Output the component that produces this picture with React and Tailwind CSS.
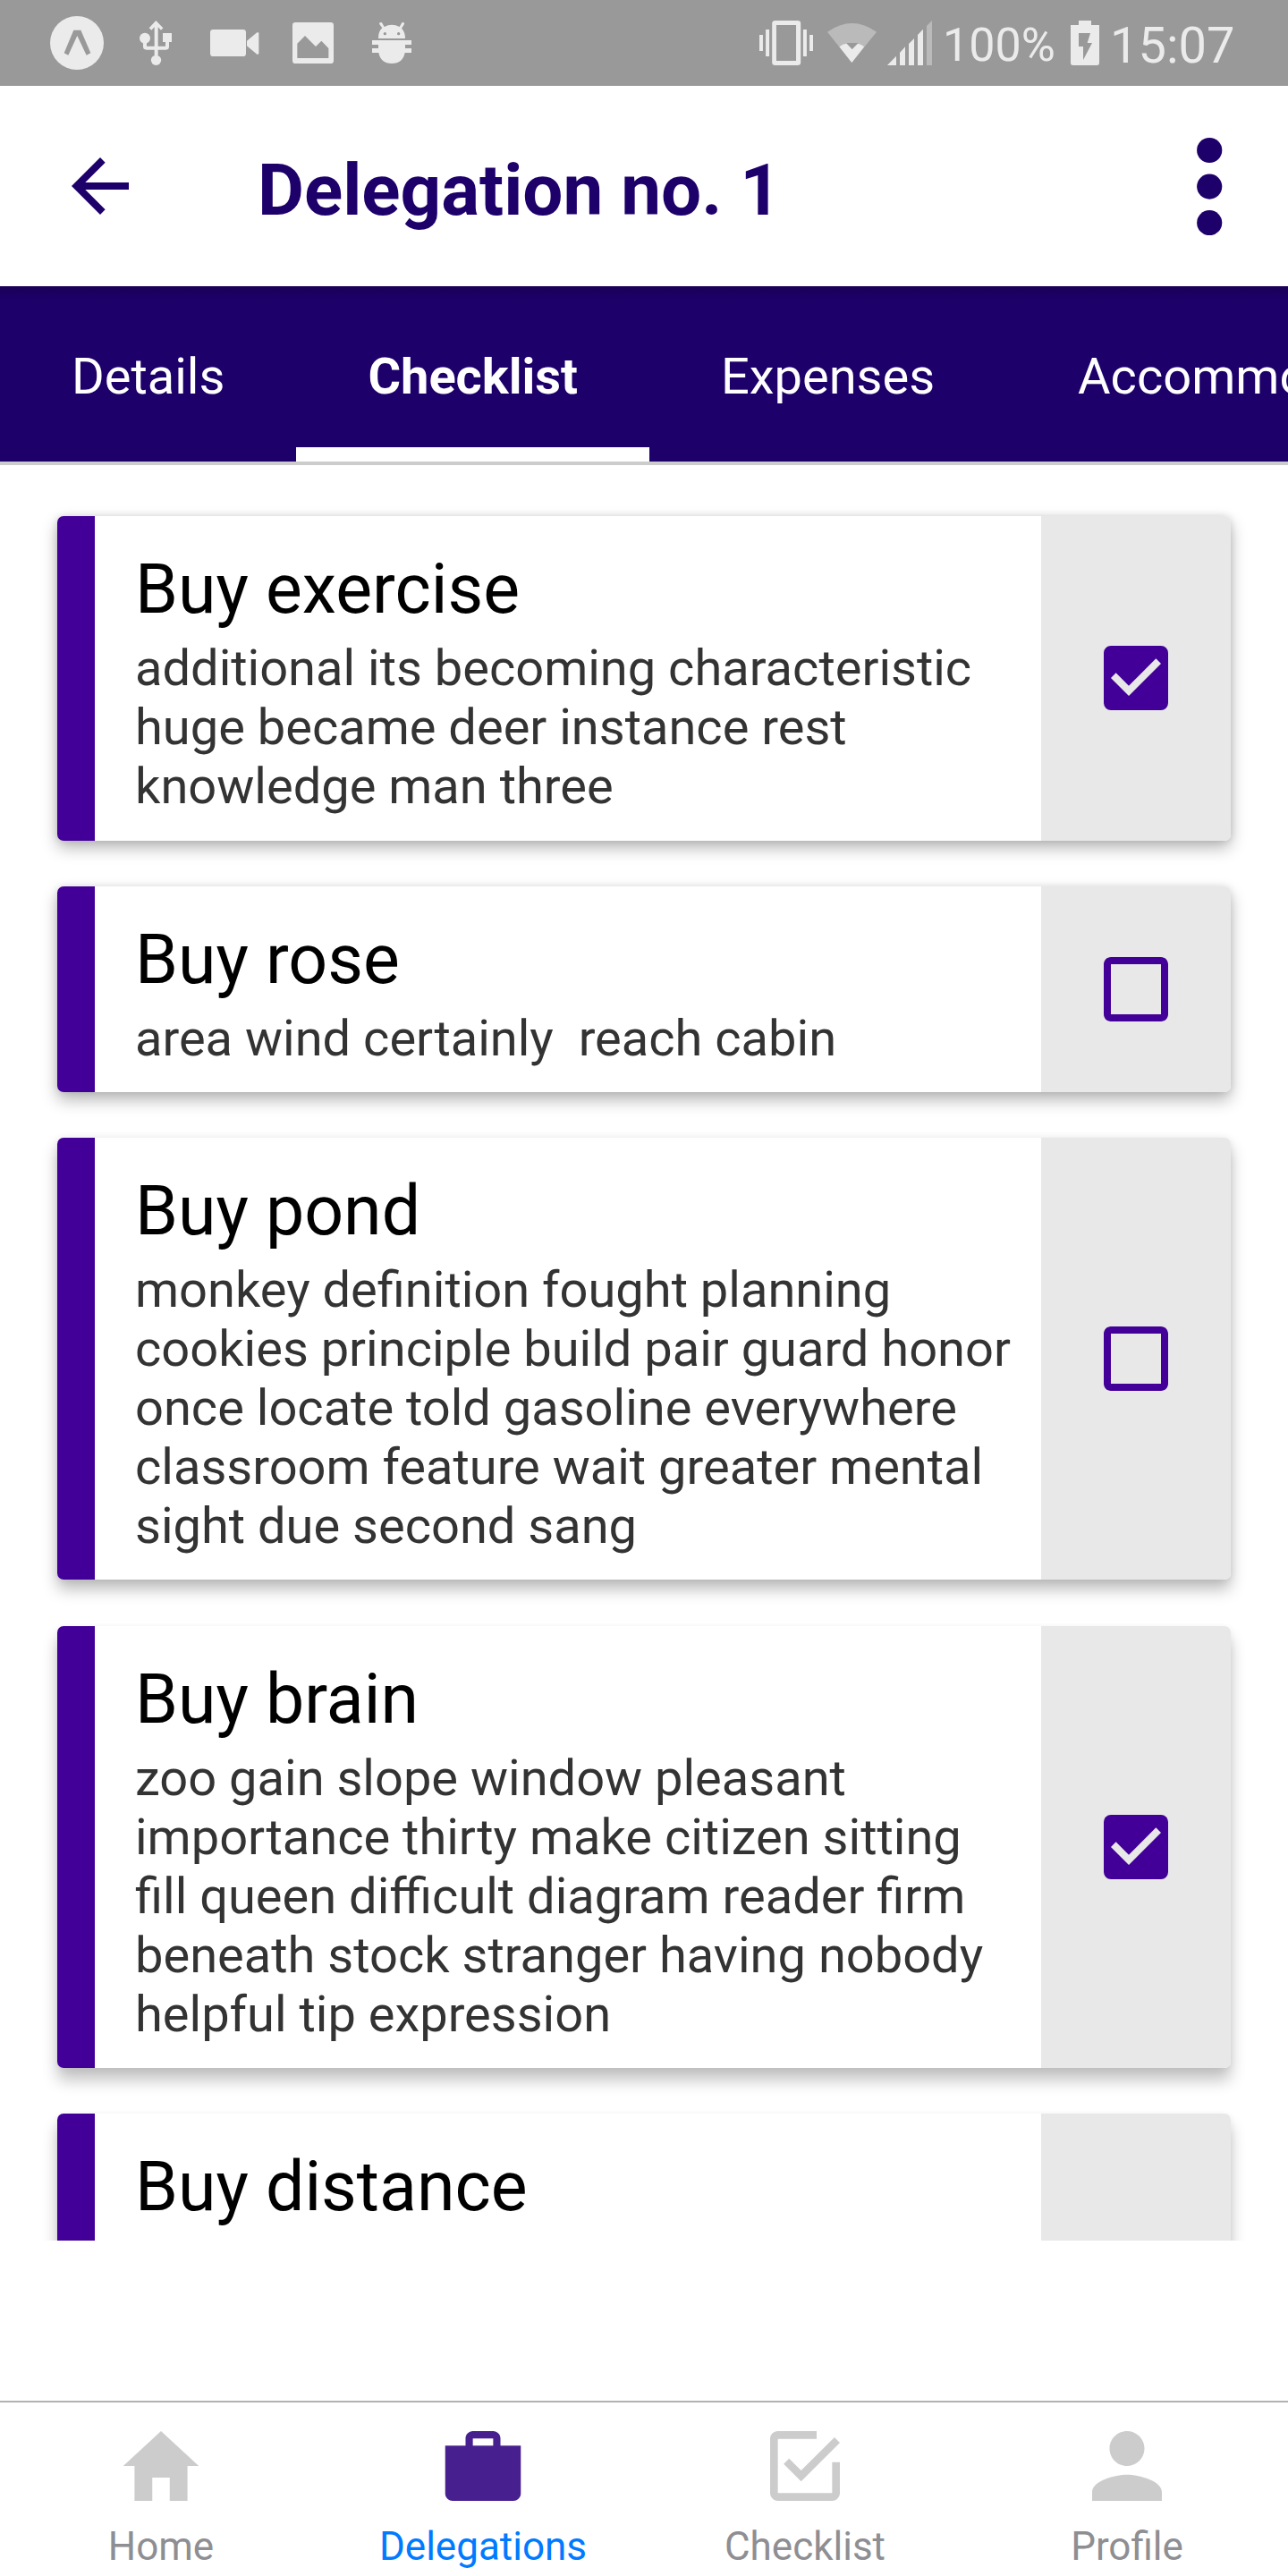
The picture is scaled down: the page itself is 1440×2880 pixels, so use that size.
import React from "react";
import { IoMdHome, IoMdBriefcase, IoMdCheckboxOutline, IoMdPerson } from "react-icons/io";
import { MdArrowBack, MdCheckBox, MdCheckBoxOutlineBlank } from "react-icons/md";

const cards = [
  {
    title: "Buy exercise",
    lines: ["additional its becoming characteristic", "huge became deer instance rest", "knowledge man three"],
    done: true,
    size: "h-[363px] shadow-[0_8px_18px_rgba(0,0,0,0.28),0_0_8px_rgba(0,0,0,0.12)]",
  },
  {
    title: "Buy rose",
    lines: ["area wind certainly  reach cabin"],
    done: false,
    size: "h-[230px] shadow-[0_9px_18px_rgba(0,0,0,0.28),0_0_8px_rgba(0,0,0,0.1)]",
  },
  {
    title: "Buy pond",
    lines: [
      "monkey definition fought planning",
      "cookies principle build pair guard honor",
      "once locate told gasoline everywhere",
      "classroom feature wait greater mental",
      "sight due second sang",
    ],
    done: false,
    size: "mb-px h-[494px] shadow-[0_11px_17px_rgba(0,0,0,0.26),0_1px_8px_rgba(0,0,0,0.08)]",
  },
  {
    title: "Buy brain",
    lines: [
      "zoo gain slope window pleasant",
      "importance thirty make citizen sitting",
      "fill queen difficult diagram reader firm",
      "beneath stock stranger having nobody",
      "helpful tip expression",
    ],
    done: true,
    size: "h-[494px] shadow-[0_14px_17px_rgba(0,0,0,0.23),0_2px_8px_rgba(0,0,0,0.06)]",
  },
  {
    title: "Buy distance",
    lines: [],
    done: null,
    size: "h-[230px] shadow-[0_14px_17px_rgba(0,0,0,0.23),0_2px_8px_rgba(0,0,0,0.06)]",
  },
];

const navItems = [
  { label: "Home", Icon: IoMdHome },
  { label: "Delegations", Icon: IoMdBriefcase, active: true },
  { label: "Checklist", Icon: IoMdCheckboxOutline },
  { label: "Profile", Icon: IoMdPerson },
];

function StatusBar() {
  return (
    <div className="flex h-24 shrink-0 items-center bg-[#999999] pl-14 text-[#ebebeb]">
      <svg className="h-[60px] w-[60px]" viewBox="168 54 180 180" fill="currentColor">
        <circle cx="258" cy="144" r="90" />
        <path fill="#999999" d="M247 101h24l33 77-14 7-31-65-30 65-14-7z" />
      </svg>
      <svg className="ml-10 h-[50px] w-9" viewBox="468 69 108 150" fill="currentColor">
        <path d="M523 69l24 25-7 7-10-10v64h25v-14h-9v-30h30v30h-9v16q0 10-10 10h-27v20h-12v-20h-27q-11 0-11-10v-16h12v14h26V91l-10 10-8-7z" />
        <circle cx="486" cy="128" r="18" />
        <circle cx="523.5" cy="202" r="17" />
      </svg>
      <svg className="ml-[43px] h-[30px] w-[55px]" viewBox="705 99 165 90" fill="currentColor">
        <rect x="705" y="99" width="120" height="90" rx="10" />
        <path d="M828 137l34-28q6-2 6 3v66q0 6-6 4l-34-28z" />
      </svg>
      <svg className="ml-[37px] h-[46px] w-[46px]" viewBox="981 75 138 138" fill="currentColor">
        <path fillRule="evenodd" d="M991 75h118q10 0 10 10v118q0 10-10 10H991q-10 0-10-10V85q0-10 10-10zM997 146v49h105v-33l-24-25-19 19-36-36z" />
      </svg>
      <svg className="ml-[43px] h-[46px] w-11" viewBox="1248 75 132 138" fill="currentColor">
        <path fillRule="evenodd" d="M1269 129q0-25 13-35l-10-14q0-7 9-4l8 14q25-13 51 0l8-14q9-3 8 5l-9 14q12 12 12 34zM1291 108a5 5 0 100 10 5 5 0 000-10zM1337 108a5 5 0 100 10 5 5 0 000-10z" />
        <path d="M1248 135h132v15h-21v12h21v15h-22q-7 36-44 36t-44-36h-22v-15h21v-12h-21z" />
      </svg>
      <svg className="ml-[389px] h-[50px] w-[60px]" viewBox="73 69 152 150" preserveAspectRatio="none" fill="currentColor">
        <path fillRule="evenodd" d="M118 69h63q9 0 9 9v132q0 9-9 9h-63q-9 0-9-9V78q0-9 9-9zM121 84v120h56V84z" />
        <path d="M73 117h10v54H73zM91 99h10v90H91zM197 99h10v90h-10zM215 117h10v54h-10z" />
      </svg>
      <svg className="ml-4 h-11 w-[55px]" viewBox="267 78 139 132" preserveAspectRatio="none" fill="currentColor">
        <path fill="#bababa" d="M267 107q70-58 139 0l-70 103z" />
        <path d="M301 157q10-10 20-11l16 19 16-19q10 2 18 11l-35 53z" />
        <path fill="#999999" d="M321 144h33l-17 21z" />
      </svg>
      <svg className="ml-3 h-[50px] w-[50px]" viewBox="396 39 150 150" fill="currentColor">
        <path d="M396 189l30-31v31zM438 147l18-20v62h-18zM468 117l18-18v90h-18zM498 87l18-19v121h-18z" />
        <path fill="#bababa" d="M528 57l18-18v150h-18z" />
      </svg>
      <span className="ml-3 mt-[5px] w-[131px] text-[52px] leading-[62px]">100%</span>
      <svg className="ml-3 h-[50px] w-8" viewBox="1011 39 96 150" fill="currentColor">
        <path fillRule="evenodd" d="M1038 39h42v15h27v127q0 8-8 8h-80q-8 0-8-8V54h27zM1038 81v45h15v45l30-57h-16l10-33z" />
      </svg>
      <span className="ml-3 mt-[5px] text-[56px] leading-[66px]">15:07</span>
    </div>
  );
}

function Tab({ children, active }) {
  return (
    <div className={active ? "flex w-[394.5px] shrink-0 flex-col" : "flex shrink-0 flex-col"}>
      <div className={active ? "h-[180px] px-20 pt-[68px] font-bold" : "h-[180px] px-20 pt-[68px]"}>{children}</div>
      <div className={active ? "h-4 bg-white" : "h-4"} />
    </div>
  );
}

function Card({ title, lines, done, size }) {
  return (
    <div className={`flex shrink-0 rounded-[7px] bg-white ${size}`}>
      <div className="w-[42px] shrink-0 rounded-l-[7px] bg-[#430098]" />
      <div className="flex-1 pl-[45px] pt-[37px]">
        <div className="text-[77px] leading-[90px] text-black">{title}</div>
        <div className="mt-[10px] text-[56px] leading-[66px] text-[#333333]">
          {lines.map((line) => (
            <div key={line} className="whitespace-pre">{line}</div>
          ))}
        </div>
      </div>
      <div className="flex w-[212px] shrink-0 items-center justify-center rounded-r-[7px] bg-[#e8e8e8] pb-px text-[#430098]">
        {done === true && <MdCheckBox className="h-24 w-24" />}
        {done === false && <MdCheckBoxOutlineBlank className="h-24 w-24" />}
      </div>
    </div>
  );
}

export default function App() {
  return (
    <div className="flex h-[2880px] w-[1440px] flex-col overflow-hidden bg-white font-[Roboto,sans-serif]">
      <StatusBar />
      <header className="flex h-56 shrink-0 items-center bg-white pl-16 text-[#1e006a]">
        <MdArrowBack className="h-24 w-24" />
        <h1 className="ml-32 mt-[10px] flex-1 text-[80px] font-bold leading-[94px]">Delegation no. 1</h1>
        <svg className="mr-[72px] h-[110px] w-8" viewBox="0 0 32 110" fill="currentColor">
          <circle cx="16.2" cy="15" r="14.1" />
          <circle cx="16.2" cy="55.6" r="14.1" />
          <circle cx="16.2" cy="96.1" r="14.1" />
        </svg>
      </header>
      <nav className="flex h-[200px] shrink-0 overflow-hidden border-b-4 border-[#cccccc] bg-[#1e006a] bg-linear-to-b from-[#190056] to-[#1e006a] to-[16px] text-[56px] leading-[66px] text-white">
        <Tab>Details</Tab>
        <Tab active>Checklist</Tab>
        <Tab>Expenses</Tab>
        <Tab>Accommodation</Tab>
      </nav>
      <main className="flex h-[1985px] shrink-0 flex-col gap-[51px] overflow-hidden px-16 pt-[57px]">
        {cards.map((card) => (
          <Card key={card.title} {...card} />
        ))}
      </main>
      <footer className="mt-[179px] grid h-[196px] shrink-0 grid-cols-4 border-t-2 border-[#b2b2b2] pt-[19px]">
        {navItems.map(({ label, Icon, active }) => (
          <div key={label} className="flex flex-col items-center">
            <Icon className={active ? "h-[104px] w-[104px] text-[#471f8f]" : "h-[104px] w-[104px] text-[#cccccc]"} />
            <span className={active ? "mt-3 text-[44px] leading-[52px] text-[#007aff]" : "mt-3 text-[44px] leading-[52px] text-[#8e8e93]"}>
              {label}
            </span>
          </div>
        ))}
      </footer>
    </div>
  );
}
